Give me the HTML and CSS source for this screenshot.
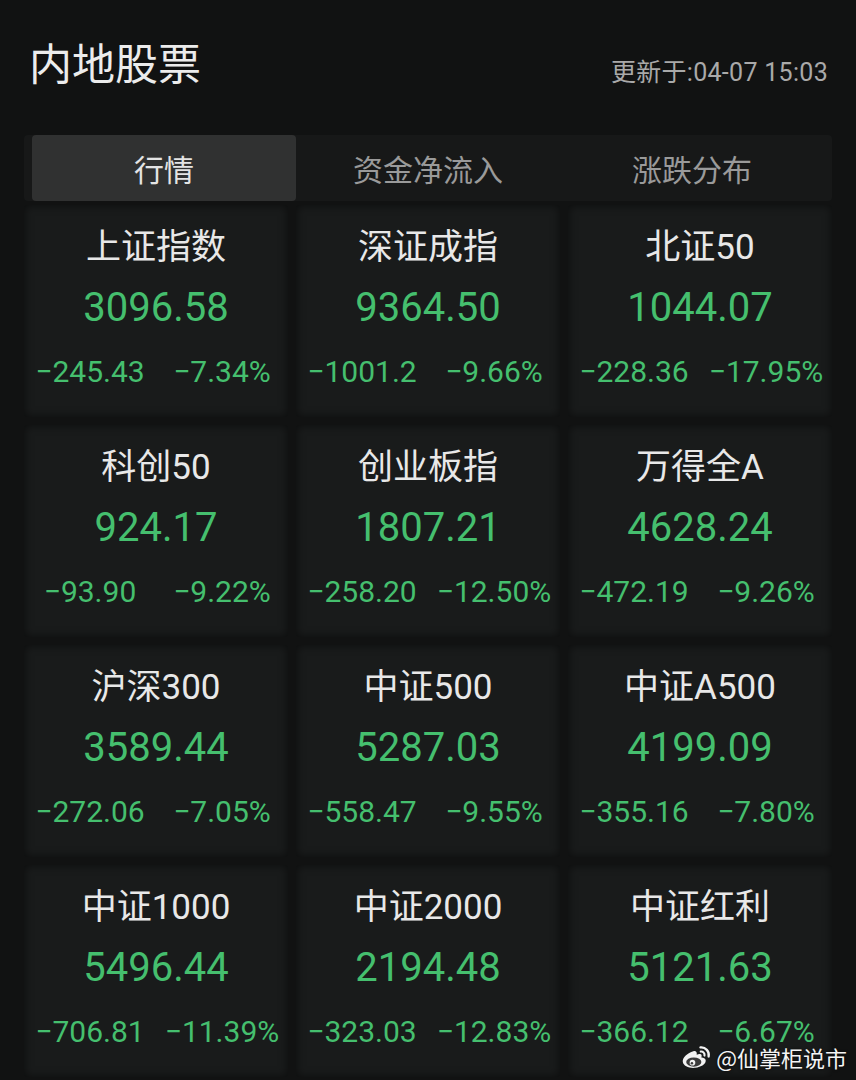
FILE: index.html
```html
<!DOCTYPE html>
<html lang="zh-CN">
<head>
<meta charset="utf-8">
<title>内地股票</title>
<link rel="stylesheet" href="styles.css">
</head>
<body>
<div class="page">
  <header class="header">
    <h1 class="title">内地股票</h1>
    <div class="updated">更新于:04-07 15:03</div>
  </header>

  <nav class="tabs">
    <div class="tab active">行情</div>
    <div class="tab">资金净流入</div>
    <div class="tab">涨跌分布</div>
  </nav>

  <section class="grid">
    <div class="card"><div class="name">上证指数</div><div class="value">3096.58</div><div class="chg"><span>−245.43</span><span>−7.34%</span></div></div>
    <div class="card"><div class="name">深证成指</div><div class="value">9364.50</div><div class="chg"><span>−1001.2</span><span>−9.66%</span></div></div>
    <div class="card"><div class="name">北证50</div><div class="value">1044.07</div><div class="chg"><span>−228.36</span><span>−17.95%</span></div></div>

    <div class="card"><div class="name">科创50</div><div class="value">924.17</div><div class="chg"><span>−93.90</span><span>−9.22%</span></div></div>
    <div class="card"><div class="name">创业板指</div><div class="value">1807.21</div><div class="chg"><span>−258.20</span><span>−12.50%</span></div></div>
    <div class="card"><div class="name">万得全A</div><div class="value">4628.24</div><div class="chg"><span>−472.19</span><span>−9.26%</span></div></div>

    <div class="card"><div class="name">沪深300</div><div class="value">3589.44</div><div class="chg"><span>−272.06</span><span>−7.05%</span></div></div>
    <div class="card"><div class="name">中证500</div><div class="value">5287.03</div><div class="chg"><span>−558.47</span><span>−9.55%</span></div></div>
    <div class="card"><div class="name">中证A500</div><div class="value">4199.09</div><div class="chg"><span>−355.16</span><span>−7.80%</span></div></div>

    <div class="card"><div class="name">中证1000</div><div class="value">5496.44</div><div class="chg"><span>−706.81</span><span>−11.39%</span></div></div>
    <div class="card"><div class="name">中证2000</div><div class="value">2194.48</div><div class="chg"><span>−323.03</span><span>−12.83%</span></div></div>
    <div class="card"><div class="name">中证红利</div><div class="value">5121.63</div><div class="chg"><span>−366.12</span><span>−6.67%</span></div></div>
  </section>

  <div class="mark">
    <svg class="mark-logo" viewBox="0 0 34 28" aria-hidden="true">
      <path d="M14 7.5C7.5 9.5 1.5 14.5 2 19.5C2.6 24.5 9.5 27 16 26.3C23 25.6 28.5 22 28 17.8C27.7 15.2 24.6 14.4 23 14.6C24 12 23.4 9.6 19.6 10.8L17.8 11.4C18.4 8.2 16.6 6.8 14 7.5Z" fill="#f2f2f2"/>
      <ellipse cx="14.5" cy="19.8" rx="8.6" ry="5.2" fill="#3a3a3a"/>
      <circle cx="13" cy="20.4" r="3.2" fill="#f2f2f2"/>
      <circle cx="12.4" cy="21" r="1.4" fill="#3a3a3a"/>
      <path d="M22 3.2A8.5 8.5 0 0 1 31.3 13.4" fill="none" stroke="#f2f2f2" stroke-width="2.6" stroke-linecap="round"/>
      <path d="M22.4 7.8A3.8 3.8 0 0 1 26.6 12.4" fill="none" stroke="#f2f2f2" stroke-width="2.4" stroke-linecap="round"/>
    </svg>
    <span class="mark-text">@仙掌柜说市</span>
  </div>
</div>
</body>
</html>
```

FILE: styles.css
```css
html, body {
  margin: 0;
  padding: 0;
  background: #111212;
}

.page {
  position: relative;
  width: 856px;
  height: 1080px;
  overflow: hidden;
  font-family: "Noto Sans CJK SC", "Noto Sans", sans-serif;
  color: #e6e6e6;
}

/* heading row */
.header {
  display: flex;
  justify-content: space-between;
  align-items: flex-end;
  padding: 30px 28px 0 29px;
  height: 58px;
}

.title {
  margin: 0;
  font-size: 43px;
  font-weight: 400;
  line-height: 54px;
  color: #ececec;
}

.updated {
  font-family: "Roboto", "Noto Sans CJK SC", sans-serif;
  font-size: 25px;
  line-height: 30px;
  color: #a9a9a9;
  letter-spacing: 0.3px;
}

/* segmented tabs */
.tabs {
  display: grid;
  grid-template-columns: repeat(3, 1fr);
  margin: 47px 24px 0 24px;
  padding: 0 8px;
  background: #171818;
  border-radius: 4px;
}

.tab {
  height: 66px;
  display: flex;
  align-items: center;
  justify-content: center;
  font-size: 30px;
  color: #9a9a9a;
}

.tab.active {
  background: #303131;
  color: #e4e4e4;
  border-radius: 4px;
}

/* index cards */
.grid {
  display: grid;
  grid-template-columns: repeat(3, 264px);
  grid-auto-rows: 212px;
  gap: 8px;
  margin: 4px 24px 0 24px;
}

.card {
  background: #191b1b;
  border-radius: 4px;
  box-shadow: inset 0 0 10px rgba(0, 0, 0, 0.55);
  display: flex;
  flex-direction: column;
  align-items: center;
}

.name {
  margin-top: 20px;
  font-size: 35px;
  line-height: 46px;
  color: #e8e8e8;
  font-family: "Roboto", "Noto Sans CJK SC", sans-serif;
}

.value {
  margin-top: 12px;
  font-family: "Roboto", "Noto Sans", sans-serif;
  font-size: 40px;
  line-height: 50px;
  color: #45bf6e;
}

.chg {
  align-self: stretch;
  display: grid;
  grid-template-columns: 1fr 1fr;
  margin-top: 19px;
  font-family: "Roboto", "Noto Sans", sans-serif;
  font-size: 30px;
  line-height: 40px;
  color: #45bf6e;
  text-align: center;
  white-space: nowrap;
}

/* author watermark */
.mark {
  position: absolute;
  right: 9px;
  bottom: 8px;
  display: flex;
  align-items: center;
  gap: 5px;
}

.mark-logo {
  width: 30px;
  height: 26px;
}

.mark-text {
  font-size: 22px;
  line-height: 30px;
  color: #f4f4f4;
  text-shadow: 0 0 3px rgba(0, 0, 0, 0.8);
}
```
